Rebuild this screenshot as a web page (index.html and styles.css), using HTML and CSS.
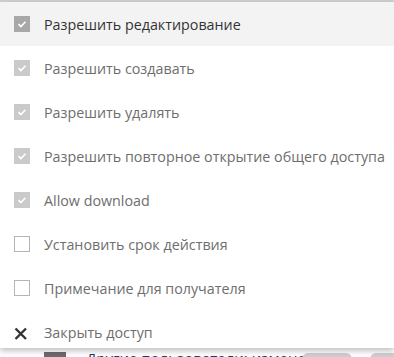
FILE: index.html
```html
<!DOCTYPE html>
<html>
<head>
<meta charset="utf-8">
<link rel="stylesheet" href="styles.css">
</head>
<body>
<div class="backdrop">
  <span class="bd-chip"></span>
  <span class="bd-text">Другие пользователи: изменение</span>
  <span class="bd-pill"></span>
  <span class="bd-pill2"></span>
</div>
<div class="topbar"></div>
<ul class="menu">
  <li class="item active"><span class="cb checked dark"><svg viewBox="0 0 16 16"><path d="M4.5 8.2l2.4 2.3 4.6-4.8" fill="none" stroke="#fff" stroke-width="1.6"/></svg></span><span class="label">Разрешить редактирование</span></li>
  <li class="item"><span class="cb checked"><svg viewBox="0 0 16 16"><path d="M4.5 8.2l2.4 2.3 4.6-4.8" fill="none" stroke="#fff" stroke-width="1.6"/></svg></span><span class="label">Разрешить создавать</span></li>
  <li class="item"><span class="cb checked"><svg viewBox="0 0 16 16"><path d="M4.5 8.2l2.4 2.3 4.6-4.8" fill="none" stroke="#fff" stroke-width="1.6"/></svg></span><span class="label">Разрешить удалять</span></li>
  <li class="item"><span class="cb checked"><svg viewBox="0 0 16 16"><path d="M4.5 8.2l2.4 2.3 4.6-4.8" fill="none" stroke="#fff" stroke-width="1.6"/></svg></span><span class="label">Разрешить повторное открытие общего доступа</span></li>
  <li class="item"><span class="cb checked"><svg viewBox="0 0 16 16"><path d="M4.5 8.2l2.4 2.3 4.6-4.8" fill="none" stroke="#fff" stroke-width="1.6"/></svg></span><span class="label">Allow download</span></li>
  <li class="item"><span class="cb"></span><span class="label">Установить срок действия</span></li>
  <li class="item"><span class="cb"></span><span class="label">Примечание для получателя</span></li>
  <li class="item last"><span class="xicon"><svg viewBox="0 0 16 16"><path d="M1.5 4.5L12 15M12 4.5L1.5 15" fill="none" stroke="#333" stroke-width="2.4"/></svg></span><span class="label">Закрыть доступ</span></li>
</ul>
</body>
</html>
```
FILE: styles.css
```css
html, body {
  margin: 0;
  padding: 0;
  background: #fff;
  width: 394px;
  height: 357px;
  overflow: hidden;
  font-family: "Open Sans", "Noto Sans", sans-serif;
}
.backdrop {
  position: absolute;
  left: 0;
  top: 340px;
  width: 394px;
  height: 17px;
}
.bd-chip {
  position: absolute;
  left: 44px;
  top: 12px;
  width: 22px;
  height: 10px;
  background: #6b6b6b;
}
.bd-text {
  position: absolute;
  left: 86px;
  top: 8px;
  font-size: 15px;
  line-height: 20px;
  color: #1d3b6b;
  white-space: nowrap;
}
.bd-pill {
  position: absolute;
  left: 302px;
  top: 13px;
  width: 50px;
  height: 20px;
  border-radius: 6px;
  background: #cfcfcf;
}
.bd-pill2 {
  position: absolute;
  left: 370px;
  top: 13px;
  width: 40px;
  height: 20px;
  border-radius: 6px;
  background: #cfcfcf;
}
.topbar {
  position: relative;
  height: 2px;
  background: #cdd0d3;
}
.menu {
  position: relative;
  list-style: none;
  margin: 0;
  padding: 0;
  background: #fff;
  height: 346px;
  overflow: hidden;
  box-shadow: 0 3px 6px rgba(0,0,0,0.25);
}
.item {
  display: flex;
  align-items: center;
  height: 44px;
  padding-left: 14px;
  gap: 14px;
  font-size: 14.3px;
  color: #6e6e6e;
}
.item.active {
  background: #f3f3f3;
  color: #333;
}
.cb {
  flex: none;
  width: 16px;
  height: 16px;
  box-sizing: border-box;
  border: 1px solid #b5b5b5;
  background: #fff;
  display: flex;
}
.cb.checked {
  border: none;
  background: #cacaca;
}
.cb.checked.dark {
  background: #a8a8a8;
}
.cb svg, .xicon svg {
  width: 16px;
  height: 16px;
}
.xicon {
  flex: none;
  width: 16px;
  height: 16px;
  display: flex;
}
.label {
  white-space: nowrap;
}
```
